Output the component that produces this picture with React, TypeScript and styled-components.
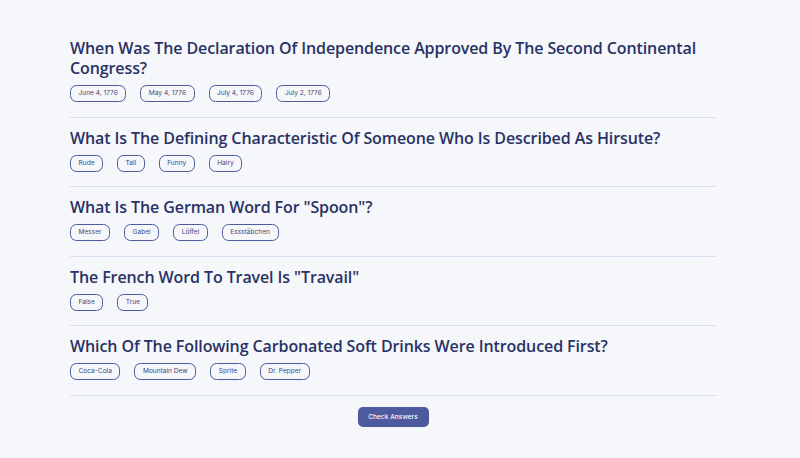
import React from "react";
import styled, { createGlobalStyle } from "styled-components";

const Global = createGlobalStyle`
  html, body { margin: 0; padding: 0; background: #F5F7FB; }
  body { font-family: Inter, "Noto Sans", sans-serif; }
`;

const Page = styled.main`
  width: 800px;
  height: 458px;
  box-sizing: border-box;
  padding: 38px 0 0 70px;
  background: #F5F7FB;
`;

const Column = styled.div`
  width: 646px;
  display: flex;
  flex-direction: column;
`;

const Question = styled.section<{ $first?: boolean }>`
  padding: ${(p) => (p.$first ? "0" : "10px")} 0 14.5px;
  border-bottom: 1px solid #DBDEF0;
`;

const Title = styled.h2`
  margin: 0 0 7px;
  font-family: "Open Sans", "Liberation Sans", sans-serif;
  font-weight: 600;
  font-size: 16px;
  letter-spacing: -0.1px;
  line-height: 20px;
  color: #293264;
`;

const Answers = styled.div`
  display: flex;
  gap: 14px;
`;

const Answer = styled.button`
  height: 17px;
  box-sizing: border-box;
  padding: 0 7.5px;
  border: 0.8px solid #4D5B9E;
  border-radius: 6.5px;
  background: transparent;
  font-family: Inter, sans-serif;
  font-size: 6.6px;
  color: #3D477E;
  line-height: 1;
`;

const Footer = styled.div`
  display: flex;
  justify-content: center;
  padding-top: 11px;
`;

const CheckButton = styled.button`
  width: 71px;
  height: 20px;
  padding: 0;
  border: none;
  border-radius: 5px;
  background: #4D5B9E;
  color: #F5F7FB;
  font-family: Inter, sans-serif;
  font-size: 6.6px;
  font-weight: 500;
`;

const questions = [
  {
    q: "When Was The Declaration Of Independence Approved By The Second Continental Congress?",
    a: ["June 4, 1776", "May 4, 1776", "July 4, 1776", "July 2, 1776"],
  },
  {
    q: "What Is The Defining Characteristic Of Someone Who Is Described As Hirsute?",
    a: ["Rude", "Tall", "Funny", "Hairy"],
  },
  { q: 'What Is The German Word For "Spoon"?', a: ["Messer", "Gabel", "Löffel", "Essstäbchen"] },
  { q: 'The French Word To Travel Is "Travail"', a: ["False", "True"] },
  {
    q: "Which Of The Following Carbonated Soft Drinks Were Introduced First?",
    a: ["Coca-Cola", "Mountain Dew", "Sprite", "Dr. Pepper"],
  },
];

export default function App() {
  return (
    <Page>
      <Global />
      <Column>
        {questions.map((item, i) => (
          <Question key={i} $first={i === 0}>
            <Title>{item.q}</Title>
            <Answers>
              {item.a.map((ans) => (
                <Answer key={ans}>{ans}</Answer>
              ))}
            </Answers>
          </Question>
        ))}
        <Footer>
          <CheckButton>Check Answers</CheckButton>
        </Footer>
      </Column>
    </Page>
  );
}
